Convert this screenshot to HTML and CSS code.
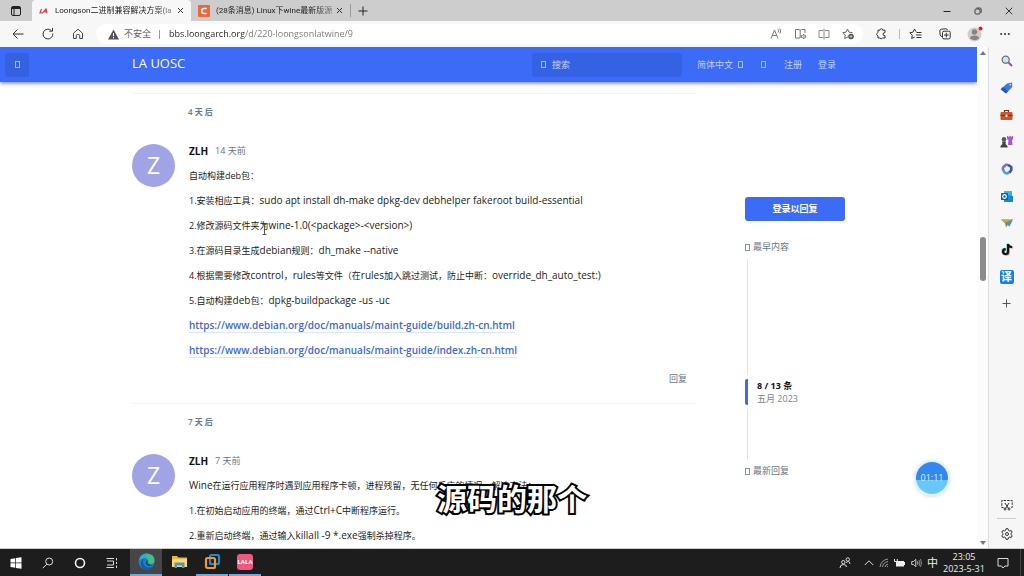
FILE: index.html
```html
<!DOCTYPE html>
<html lang="zh-CN">
<head>
<meta charset="utf-8">
<title>Loongson二进制兼容解决方案</title>
<link rel="stylesheet" href="styles.css">
</head>
<body>
<div class="desktop">
  <header class="tabs">
    <button class="tab-menu" aria-label="标签页操作"><svg width="12" height="12" viewBox="0 0 12 12" fill="none" stroke="#222"><rect x="1.5" y="1.5" width="9" height="9" rx="1.5"/><path d="M1.5 3h9" stroke-width="2"/><path d="M4 3v7" stroke-width="1"/></svg></button>
    <div class="tab active">
      <svg width="10" height="10" viewBox="0 0 10 10" fill="none" stroke="#e2384d" stroke-width="1.2"><path d="M2.500 3 1 7h2.500L7 3 8 7M5.500 5.800h2"/></svg>
      <span class="tab-title">Loongson二进制兼容解决方案(la</span>
      <button class="close" aria-label="关闭"><svg width="7" height="7" viewBox="0 0 7 7" stroke="#333"><path d="M1 1l5 5M6 1 1 6"/></svg></button>
    </div>
    <div class="tab">
      <svg width="12" height="12" viewBox="0 0 12 12"><rect width="12" height="12" rx="1" fill="#f0653c"/><path d="M8.7 3.5H6q-2.3 0-2.3 2.5T6 8.5h2.5" fill="none" stroke="#fff" stroke-width="1.6"/></svg>
      <span class="tab-title">(28条消息) Linux下wine最新版源</span>
      <button class="close" aria-label="关闭"><svg width="7" height="7" viewBox="0 0 7 7" stroke="#333"><path d="M1 1l5 5M6 1 1 6"/></svg></button>
    </div>
    <button class="new-tab" aria-label="新建标签页"><svg width="10" height="10" viewBox="0 0 10 10" stroke="#222"><path d="M5 .5v9M.5 5h9"/></svg></button>
    <div class="window-buttons">
      <button aria-label="最小化"><svg width="8" height="8" viewBox="0 0 8 8" stroke="#222"><path d="M.5 4.5h7"/></svg></button>
      <button aria-label="还原"><svg width="8" height="8" viewBox="0 0 8 8" stroke="#222" stroke-width=".8" fill="none"><rect x="1" y="2" width="5" height="5" rx="1"/><path d="M2.5 1h3.5q1.2 0 1.2 1.2v3.5"/></svg></button>
      <button aria-label="关闭窗口"><svg width="8" height="8" viewBox="0 0 8 8" stroke="#222" stroke-width=".9"><path d="M.7.7l6.6 6.6M7.3.7.7 7.3"/></svg></button>
    </div>
  </header>

  <nav class="toolbar">
    <div class="nav-buttons">
      <button aria-label="后退"><svg width="12" height="12" viewBox="0 0 12 12" fill="none" stroke="#333"><path d="M11.5 6H1M5.5 1.5 1 6l4.500 4.500"/></svg></button>
      <button aria-label="刷新"><svg width="12" height="12" viewBox="0 0 12 12" fill="none" stroke="#333"><path d="M10.800 5.500a4.900 4.900 0 1 1-1.500-3M10.500 0v3.200H7.300"/></svg></button>
      <button aria-label="主页"><svg width="12" height="12" viewBox="0 0 12 12" fill="none" stroke="#444"><path d="M1.500 5.200 6 1.200l4.500 4v5.300H7.700V7.500q0-1-1-1H5.300q-1 0-1 1v3H1.500z"/></svg></button>
    </div>
    <div class="address">
      <svg width="11" height="11" viewBox="0 0 11 11"><path d="M5.500.5 11 10.500H0z" fill="#555"/><path d="M5.500 4v3.200M5.500 8v1.300" stroke="#fff"/></svg>
      <span class="insecure">不安全</span><span class="bar"></span>
      <input class="url" aria-label="地址" value="bbs.loongarch.org/d/220-loongsonlatwine/9">
      <button aria-label="朗读"><svg width="12" height="12" viewBox="0 0 12 12" fill="none" stroke="#777"><path d="M1 10.500 4.500 2 8 10.500M2.200 7.500h4.600M8 1.200q1.300 1.300 0 3.300M9.700.5q2 2.200.1 5"/></svg></button>
      <button aria-label="阅读视图"><svg width="13" height="12" viewBox="0 0 13 12" fill="none" stroke="#777"><path d="M6 10H1.500V1.500H5l1.200.8 1.200-.8H11v3.500M6.200 2.300V10M7.500 7.500v2h1l1.500 1.500V6L8.500 7.500zM11.200 7q.8 1.500 0 3"/></svg></button>
      <button aria-label="分屏"><svg width="12" height="12" viewBox="0 0 12 12" fill="none" stroke="#888"><path d="M5 2.500H1v7h4M7 2.500h4v7H7M6 .5v11"/></svg></button>
      <button aria-label="收藏此页"><svg width="13" height="12" viewBox="0 0 13 12" fill="none" stroke="#666"><path d="M5.500 1 7 4.200l3.500.5M5.500 1 4 4.200.8 4.700l2.500 2.400-.6 3.400L6 8.900"/><circle cx="9" cy="8.500" r="2.800" fill="#555" stroke="none"/><path d="M9 7v3M7.500 8.500h3" stroke="#ddd" stroke-width=".7"/></svg></button>
    </div>
    <div class="browser-tools">
      <button class="slim" aria-label="扩展"><svg width="12" height="12" viewBox="0 0 12 12" fill="none" stroke="#333"><path d="M3 2.200h2a1.400 1.400 0 0 1 2.800 0H10v2.500q-2-.2-2 1.500T10 7.700v2.300H7.500q-1.200 1.600-2.700 0H3V8L1.300 6.200 3 4.500z"/></svg></button>
      <span class="divider"></span>
      <button aria-label="收藏夹"><svg width="13" height="12" viewBox="0 0 13 12" fill="none" stroke="#333"><path d="M7 3.700 5.500 1 4 4.200.8 4.700l2.500 2.400-.6 3.400 3-1.500M7.500 4.500h5M7 7h5.500M7.500 9.500h5"/></svg></button>
      <button aria-label="集锦"><svg width="12" height="12" viewBox="0 0 12 12" fill="none" stroke="#333"><path d="M3 8.500Q1.500 8.500 1.200 7L.8 3Q.8 1.500 2.300 1.200L7 .8Q8 .8 8.500 2"/><rect x="3.500" y="3.200" width="7.700" height="7.700" rx="1.500"/><path d="M7.300 4.700v4.700M5 7h4.700"/></svg></button>
      <button aria-label="个人资料"><svg width="16" height="16" viewBox="0 0 16 16"><circle cx="7.500" cy="8.500" r="7" fill="#d2cec9"/><circle cx="7.500" cy="6" r="2.700" fill="#858585"/><path d="M3 12.500q0-3 4.500-3t4.500 3q-4 3.500-9 0" fill="#858585"/><circle cx="13.500" cy="2.500" r="2" fill="#df2020"/></svg></button>
      <button aria-label="更多"><svg width="10" height="10" viewBox="0 0 10 10" fill="#333"><circle cx="1.200" cy="5" r="1"/><circle cx="5" cy="5" r="1"/><circle cx="8.800" cy="5" r="1"/></svg></button>
    </div>
  </nav>

  <div class="workspace">
    <main class="page">
      <header class="site-header">
        <button class="menu" aria-label="菜单"><i class="box"></i></button>
        <a class="brand" href="#">LA UOSC</a>
        <label class="search"><i class="box"></i><input type="search" placeholder="搜索" aria-label="搜索"></label>
        <button class="lang">简体中文 <i class="box"></i></button>
        <button class="theme" aria-label="主题"><i class="box"></i></button>
        <button class="signup">注册</button>
        <button class="login">登录</button>
      </header>
      <div class="columns">
        <section class="stream">
          <div class="gap">4 天 后</div>
          <article class="post">
            <div class="avatar">Z</div>
            <div class="post-main">
              <h3 class="meta">ZLH <time>14 天前</time></h3>
              <div class="post-body">
                <p>自动构建deb包：</p>
                <p>1.安装相应工具：<span class="cmd">sudo apt install dh-make dpkg-dev debhelper fakeroot build-essential</span></p>
                <p>2.修改源码文件夹为<span class="cmd">wine-1.0(&lt;package&gt;-&lt;version&gt;)</span></p>
                <p>3.在源码目录生成<span class="cmd">debian</span>规则：<span class="cmd">dh_make --native</span></p>
                <p>4.根据需要修改<span class="cmd">control</span>，<span class="cmd">rules</span>等文件（在<span class="cmd">rules</span>加入跳过测试，防止中断：<span class="cmd">override_dh_auto_test:)</span></p>
                <p>5.自动构建<span class="cmd">deb</span>包：<span class="cmd">dpkg-buildpackage -us -uc</span></p>
                <p><a href="#">https://www.debian.org/doc/manuals/maint-guide/build.zh-cn.html</a></p>
                <p><a href="#">https://www.debian.org/doc/manuals/maint-guide/index.zh-cn.html</a></p>
              </div>
              <button class="reply">回复</button>
            </div>
          </article>
          <div class="gap">7 天 后</div>
          <article class="post">
            <div class="avatar">Z</div>
            <div class="post-main">
              <h3 class="meta">ZLH <time>7 天前</time></h3>
              <div class="post-body">
                <p><span class="cmd">Wine</span>在运行应用程序时遇到应用程序卡顿，进程残留，无任何反应的情况，解决方法：</p>
                <p>1.在初始启动应用的终端，通过<span class="cmd">Ctrl+C</span>中断程序运行。</p>
                <p>2.重新启动终端，通过输入<span class="cmd">killall -9 *.exe</span>强制杀掉程序。</p>
              </div>
            </div>
          </article>
        </section>
        <aside class="aside">
          <button class="reply-login">登录以回复</button>
          <a class="scrub-link" href="#"><i class="box"></i>最早内容</a>
          <div class="track before"></div>
          <div class="handle"><strong>8 / 13 条</strong><span>五月 2023</span></div>
          <div class="track after"></div>
          <a class="scrub-link" href="#"><i class="box"></i>最新回复</a>
        </aside>
      </div>
      <svg class="ibeam" width="5" height="11" viewBox="0 0 5 11" fill="none" stroke="#555"><path d="M.5.5h4M2.500.5v10M.5 10.500h4"/></svg>
      <div class="timer">01:11</div>
    </main>
    <div class="scrollbar">
      <svg width="6" height="4" viewBox="0 0 6 4" fill="#777"><path d="M0 4 3 0l3 4z"/></svg>
      <div class="thumb"></div>
      <svg class="down" width="6" height="4" viewBox="0 0 6 4" fill="#777"><path d="M0 0h6L3 4z"/></svg>
    </div>
    <aside class="sidebar">
      <button aria-label="搜索"><svg width="12" height="12" viewBox="0 0 12 12" fill="none"><path d="M7.500 7.500 11 11" stroke="#9a49b8" stroke-width="2"/><circle cx="4.700" cy="4.700" r="3.500" fill="#cfe3f4" stroke="#687078" stroke-width="1.300"/></svg></button>
      <button aria-label="购物"><svg width="13" height="12" viewBox="0 0 13 12"><path d="M7 1.500 12 .5l.3 4.500L6 11.500.7 7.200z" fill="#3f78e0"/><path d="M.7 7.200 6 11.500l2-2-5-4.500z" fill="#2a57b5"/><circle cx="10.200" cy="2.800" r=".8" fill="#fff"/></svg></button>
      <button aria-label="工具"><svg width="13" height="12" viewBox="0 0 13 12"><path d="M4.500 3V1.500h4V3" fill="none" stroke="#7a3018" stroke-width="1.200"/><rect x=".5" y="3" width="12" height="8" rx="1" fill="#d0542b"/><path d="M.5 6.500h12" stroke="#8d2f15" stroke-width="1.300"/><path d="M5.500 5.500h2v2.500h-2z" fill="#eee"/></svg></button>
      <button aria-label="游戏"><svg width="13" height="13" viewBox="0 0 13 13"><path d="M7 1h1.300v1h1V1h1.400v1h1V1H13v3l-1 1 .5 5H8l.5-5L7 4z" fill="#b052d6"/><circle cx="4" cy="4.200" r="2.200" fill="#555"/><path d="M2 6.500h4L5.500 9 7.500 11v1.500H.5V11L2.500 9z" fill="#444"/></svg></button>
      <button aria-label="Microsoft 365"><svg width="12" height="12" viewBox="0 0 12 12" fill="none" stroke-width="2.600" stroke-linejoin="round"><path d="M7 1.800H5L2 4.500v3" stroke="#7a6bd6"/><path d="M2 6.500 3.500 9.500 6 10.500l3-1.500" stroke="#4ba5e2"/><path d="M8.500 9.500 10.300 7V4L7 1.800" stroke="#3c55b5"/></svg></button>
      <button aria-label="Outlook"><svg width="12" height="12" viewBox="0 0 12 12"><path d="M3 1h8v5H3z" fill="#35b8ed"/><path d="M3 5l9 1v6H3z" fill="#1687d0"/><path d="M0 3h7v7H0z" fill="#0766b2"/><circle cx="3.500" cy="6.500" r="1.800" fill="none" stroke="#fff" stroke-width="1.200"/></svg></button>
      <button aria-label="投递"><svg width="12" height="12" viewBox="0 0 12 12"><path d="M0 2.500h12L8.500 9.500 5 7z" fill="#3b94ce"/><path d="M0 2.500 11 3 4 6z" fill="#d5a23b"/><path d="M4 6l1 4.500L7 7.500 10 4z" fill="#7f8a60"/></svg></button>
      <button aria-label="抖音"><svg width="12" height="13" viewBox="0 0 12 13" fill="none" stroke-width="2"><path d="M7 1v7.500a2.500 2.500 0 1 1-2.500-2.500M7 1q.5 3 4 3" stroke="#e84b5e" transform="translate(.7 .6)"/><path d="M7 1v7.500a2.500 2.500 0 1 1-2.500-2.500M7 1q.5 3 4 3" stroke="#45c9cf" transform="translate(-.6 -.3)"/><path d="M7 1v7.500a2.500 2.500 0 1 1-2.500-2.500M7 1q.5 3 4 3" stroke="#111"/></svg></button>
      <button aria-label="翻译"><span class="translate">译</span></button>
      <button aria-label="添加"><svg width="9" height="9" viewBox="0 0 9 9" stroke="#555"><path d="M4.500.5v8M.5 4.500h8"/></svg></button>
      <button class="snip" aria-label="截图"><svg width="12" height="12" viewBox="0 0 12 12" fill="none" stroke="#333"><path d="M2.500 8.500H.8V1.500h10.400v7H9.500" stroke-dasharray="2.500 1"/><path d="M4 4l3.500 5.500M8 4 4.500 9.500"/><circle cx="4" cy="10" r="1"/><circle cx="8" cy="10" r="1"/></svg></button>
      <button class="settings" aria-label="设置"><svg width="12" height="12" viewBox="0 0 12 12" fill="none" stroke="#333"><path d="M5 .7h2l.4 1.600 1.300.7 1.500-.5 1 1.800L10 5.400v1.200l1.200 1.100-1 1.800L8.700 9l-1.300.7L7 11.300H5l-.4-1.600L3.300 9l-1.500.5-1-1.800L2 6.600V5.400L.8 4.300l1-1.800 1.500.5 1.300-.7z"/><circle cx="6" cy="6" r="1.500"/></svg></button>
    </aside>
  </div>

  <footer class="taskbar">
    <button aria-label="开始"><svg width="12" height="12" viewBox="0 0 12 12" fill="#fff"><path d="M.5 2 5.300 1.200v4.400H.5zM6 1.100 11.500.3v5.300H6zM.5 6.300h4.800v4.500L.5 10.100zM6 6.300h5.500v5.400L6 10.900z"/></svg></button>
    <button aria-label="搜索"><svg width="12" height="12" viewBox="0 0 12 12" fill="none" stroke="#ddd"><circle cx="7.200" cy="4.500" r="3.500"/><path d="M4.800 7.200.8 11.200"/></svg></button>
    <button aria-label="Cortana"><svg width="12" height="12" viewBox="0 0 12 12" fill="none" stroke="#f4f4f4" stroke-width="1.600"><circle cx="6" cy="6" r="4.500"/></svg></button>
    <button aria-label="任务视图"><svg width="12" height="12" viewBox="0 0 12 12" fill="none" stroke="#ddd"><path d="M.5 1.500H8M.5 10.500H8M1 4h6.500v4H1M10.500 1v2.500M10.500 5v2M10.500 8.500V11"/></svg></button>
    <button class="app current" aria-label="Edge"><svg width="17" height="17" viewBox="0 0 17 17"><circle cx="8.500" cy="8.500" r="8" fill="#1781cf"/><path d="M1 7Q3 .5 9 .5q7.500.5 7.500 7 0 3.500-4 3.500-3 0-2-2.500Q10 5 6.500 5 3 5 1 7" fill="#43bf83"/><path d="M1 7Q3 .5 9 .5l2 1Q6 3 7 5 3 4.500 1 7" fill="#32a9d7"/><path d="M7 5.500Q3.500 8 6 12t9 1.500Q12 17 7.500 16.400 2 15 3 9q1-3 4-3.500" fill="#155ba6"/><path d="M9.800 7.500Q8 9.500 10.500 11t5 .5q-3 2-6 .7-3-2-.7-4.700" fill="#383b3d"/></svg></button>
    <button class="app" aria-label="文件资源管理器"><svg width="15" height="14" viewBox="0 0 15 14"><path d="M0 1h5l1.500 1.500H15V12H0z" fill="#eab541"/><path d="M1 4h14v8H0V5z" fill="#ffd970"/><path d="M2.500 7.500h10V13H10v-2.500H5V13H2.500z" fill="#4898cf"/></svg></button>
    <button class="app running" aria-label="VMware"><svg width="17" height="17" viewBox="0 0 17 17" fill="none" stroke-width="2.200"><rect x="6" y="2" width="9" height="9" rx="1.500" stroke="#2489c6"/><rect x="2" y="5" width="9" height="10" rx="1.500" stroke="#ee992c"/><path d="M6 7.500V11h3" stroke="#2489c6" stroke-width="1.500"/></svg></button>
    <button class="app running" aria-label="LaLa"><span class="lala">LALA</span></button>
    <div class="tray">
      <svg class="people" width="12" height="12" viewBox="0 0 12 12" fill="none" stroke="#ddd"><circle cx="4.300" cy="5.200" r="1.700"/><path d="M1 11q0-3.500 3.300-3.500T7.500 10"/><circle cx="8.800" cy="2.500" r="1.700"/><path d="M6.800 6q1-1.500 2.500-1.500T11 7"/></svg>
      <svg width="10" height="10" viewBox="0 0 10 10" fill="none" stroke="#ddd"><path d="M.8 7 5 2.800 9.200 7"/></svg>
      <svg width="10" height="10" viewBox="0 0 10 10" fill="none" stroke="#999"><path d="M1 9Q2 2 9 1M3.500 9Q4 4.500 9 3.500M6 9q.5-2.500 3-3M8 9l1-1"/></svg>
      <svg width="12" height="10" viewBox="0 0 12 10" fill="#eee"><path d="M2 3h8v1h1v3h-1v1.500H2z"/><path d="M.5 1v2.500h2.800V1" fill="none" stroke="#eee"/></svg>
      <svg width="11" height="10" viewBox="0 0 11 10" fill="none" stroke="#ccc"><path d="M.7 3.500h1.800L4.800 1.300v7.400L2.500 6.500H.7zM6.500 3.500q1 1.500 0 3"/><path d="M8 2q1.800 3 0 6M9.500 1q2 4 0 8" stroke="#888"/></svg>
      <span class="ime">中</span>
      <div class="clock"><span>23:05</span><span>2023-5-31</span></div>
      <button class="notice" aria-label="通知"><svg width="12" height="12" viewBox="0 0 12 12" fill="none" stroke="#ddd"><path d="M1 1.500h10v7.500H8L6 11 4.500 9H1z"/></svg></button>
    </div>
  </footer>
  <div class="caption">源码的那个</div>
</div>
</body>
</html>
```
FILE: styles.css
```css
* { box-sizing: border-box; }
body { margin: 0; font-family: "Open Sans", "Noto Sans CJK SC", sans-serif; font-size: 9px; line-height: 16px; color: #222; }
button, input { font: inherit; color: inherit; margin: 0; padding: 0; border: 0; background: none; outline: 0; min-width: 0; }
button { display: flex; align-items: center; justify-content: center; white-space: nowrap; }
a { color: inherit; text-decoration: none; }
svg { flex: none; display: block; }
.desktop { position: relative; display: flex; flex-direction: column; height: 100vh; overflow: hidden; background: #fff; }

.tabs { display: flex; flex: none; height: 21px; background: #cdcdcd; font-family: Roboto, "Noto Sans CJK SC", sans-serif; font-size: 8px; }
.tab-menu { width: 32px; }
.tab { display: flex; align-items: center; width: 159px; padding: 0 6px 0 7px; }
.tab.active { background: #f7f7f7; border-radius: 4px 4px 0 0; }
.tab-title { flex: 1; margin-left: 6px; overflow: hidden; white-space: nowrap; mask-image: linear-gradient(90deg, #000 80%, #0006); }
.close { width: 9px; height: 12px; }
.new-tab { width: 24px; height: 13px; margin-top: 4px; border-left: 1px solid #999; }
.window-buttons { display: flex; margin-left: auto; }
.window-buttons button { width: 31px; }

.toolbar { display: flex; flex: none; align-items: center; height: 26px; background: #f7f7f7; }
.nav-buttons { display: flex; padding: 0 3px; }
.nav-buttons button { width: 30px; height: 20px; }
.address { display: flex; flex: 1; align-items: center; height: 20px; padding: 0 3px 0 12px; border-radius: 10px; background: #fff; }
.insecure { margin-left: 5px; color: #666; }
.bar { width: 1px; height: 9px; margin: 0 9px 0 8px; background: #999; }
.url { flex: 1; color: transparent; background: linear-gradient(90deg, #222 75px, #777 75px); background-clip: text; -webkit-background-clip: text; }
.address button { width: 24px; }
.browser-tools { display: flex; align-items: center; padding-right: 4px; }
.browser-tools button { width: 30px; }
.browser-tools .slim { width: 36px; }
.divider { width: 1px; height: 10px; background: #bbb; }

.workspace { display: flex; flex: 1; min-height: 0; border-bottom: 1px solid #ccc; }
.page { position: relative; flex: 1; min-width: 0; overflow: hidden; background: #fff; }
.site-header { position: relative; display: flex; align-items: center; height: 35px; padding: 0 141px 0 5px; color: #c2d0fb; background: #3b6bf7; box-shadow: 0 1px 4px #5e6fa6; }
.box { display: inline-block; flex: none; width: 5px; height: 7px; border: 1px solid currentColor; opacity: .8; }
.menu { width: 24px; height: 24px; background: #3560e0; border-radius: 3px; }
.brand { margin: 0 auto 4px 103px; color: #fff; font-size: 13px; }
.search { display: flex; align-items: center; gap: 6px; width: 150px; height: 24px; padding-left: 9px; background: #3561e3; border-radius: 3px; }
.search input { flex: 1; }
.search input::placeholder { color: #c2d0fb; opacity: 1; }
.lang { gap: 5px; margin-left: 15px; }
.theme { margin-left: 18px; }
.signup { margin-left: 18px; }
.login { margin-left: 16px; }

.columns { display: flex; padding: 11px 131px 0 132px; }
.stream { flex: 1; min-width: 0; max-width: 564px; }
.gap { padding: 10px 0 23px 56px; border-top: 1px solid #f4f4f6; color: #667788; font-size: 8px; font-weight: 600; }
.post { display: grid; grid-template-columns: 43px 1fr; gap: 14px; }
.avatar { width: 43px; height: 43px; margin-top: 1px; border-radius: 50%; background: #a0a3e4; color: #fff; font-size: 23px; line-height: 42px; text-align: center; }
.post-main { min-width: 0; }
.meta { display: flex; gap: 7px; margin: 0 0 9px; font-size: 10px; color: #111; }
.meta time { color: #667788; font-size: 9px; font-weight: 400; }
.post-body { display: flex; flex-direction: column; gap: 9px; white-space: nowrap; }
.post-body p { margin: 0; }
.cmd, .post-body a { font-size: 10px; line-height: 12px; }
.post-body a { color: #3f68d4; font-weight: 600; border-bottom: 1px solid #dde6fa; }
.reply { margin: 12px 9px 16px auto; color: #667788; }

.aside { display: flex; flex-direction: column; flex: none; width: 100px; margin-left: 49px; padding-top: 104px; }
.reply-login { height: 24px; border-radius: 3px; background: #3b6bf7; color: #fff; font-weight: 700; }
.scrub-link { display: flex; align-items: center; gap: 3px; color: #667788; }
.reply-login + .scrub-link { margin-top: 18px; }
.track { width: 1px; margin-left: 2px; background: #e0e2e6; }
.before { height: 116px; margin-top: 4px; }
.after { height: 50px; margin-bottom: 4px; }
.handle { display: flex; flex-direction: column; margin: 4px 0; padding-left: 9px; border-left: 3px solid #446be4; border-radius: 2px; line-height: 13px; color: #778491; }
.handle strong { color: #111; }
.ibeam { position: absolute; left: 262px; top: 177px; }
.timer { position: absolute; right: 29px; bottom: 54px; width: 32px; height: 32px; border-radius: 50%; background: linear-gradient(#3288ef 0 55%, #6bc7fb 58%); box-shadow: 0 0 0 2px #e1f2fb, 0 1px 5px #9bb; color: #d9f2ff; font-size: 9px; line-height: 32px; text-align: center; }

.scrollbar { display: flex; flex-direction: column; align-items: center; width: 11px; padding: 4px 0 3px; background: #fcfcfc; }
.thumb { width: 6px; height: 44px; margin-top: 182px; border-radius: 3px; background: #8b8b8b; }
.down { margin-top: auto; }
.sidebar { display: flex; flex-direction: column; width: 36px; background: #f6f6f6; border-left: 1px solid #ddd; }
.sidebar button { height: 27px; flex: none; }
.sidebar .snip { margin-top: auto; }
.sidebar .settings { margin: 0 8px; height: 30px; border-top: 1px solid #ccc; }
.translate { width: 14px; height: 14px; border-radius: 2px; background: #187ee3; color: #fff; font-size: 11px; line-height: 13px; font-weight: 700; }

.taskbar { display: flex; flex: none; height: 27px; background: #1d1d1d; color: #eee; }
.taskbar > button { width: 32px; }
.taskbar .app { margin-right: 1px; border-bottom: 2px solid transparent; }
.taskbar .current { margin-left: 2px; background: #464646; border-color: #72a9dd; }
.taskbar .running { border-color: #72a9dd; }
.lala { width: 16px; height: 16px; border-radius: 3px; background: #f0587f; color: #fff; font-size: 6px; font-weight: 700; line-height: 16px; }
.tray { display: flex; align-items: center; gap: 5px; margin-left: auto; padding-right: 3px; }
.people { margin-right: 8px; }
.ime { font-size: 11px; }
.clock { display: flex; flex-direction: column; width: 42px; margin-right: -5px; line-height: 12px; text-align: center; white-space: nowrap; }
.notice { width: 36px; height: 27px; border-right: 1px solid #444; }
.caption { position: absolute; left: 0; right: 0; bottom: 60px; color: #fff; font-size: 30px; font-weight: 700; line-height: 34px; text-align: center; -webkit-text-stroke: 4px #000; paint-order: stroke fill; pointer-events: none; }
```
